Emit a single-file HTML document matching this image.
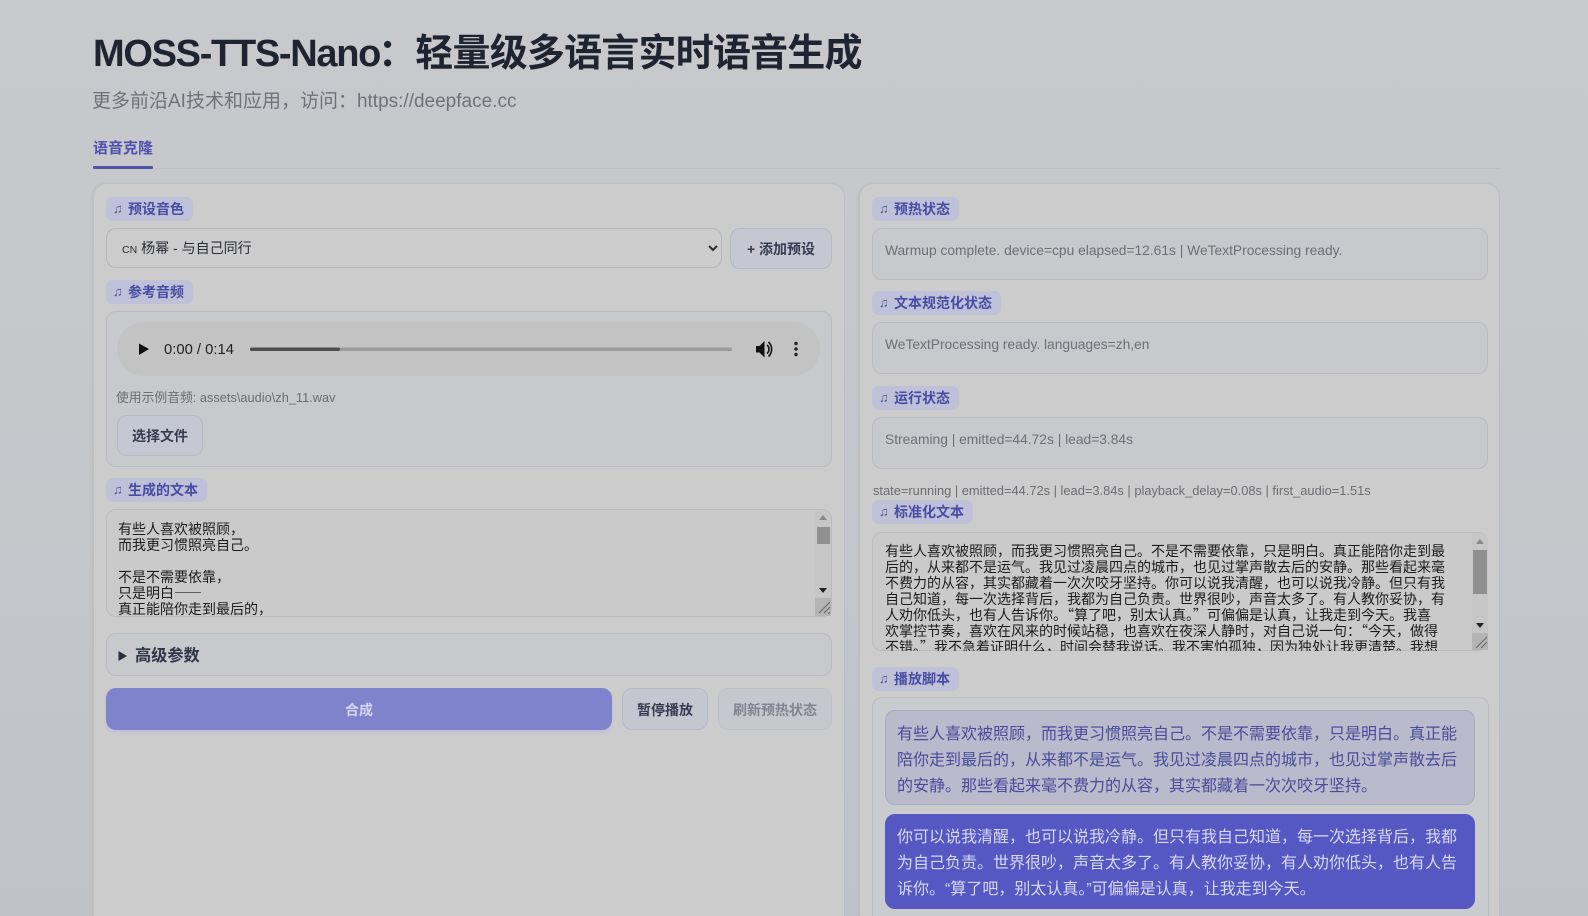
<!DOCTYPE html>
<html lang="zh-CN"><head><meta charset="utf-8"><title>MOSS-TTS-Nano</title>
<style>
*{box-sizing:border-box}
html,body{margin:0;padding:0;width:1588px;height:916px;overflow:hidden}
#p{position:relative;width:1588px;height:916px;overflow:hidden;background:linear-gradient(180deg,#c8c9cc 0,#c5c7cb 45%,#bfc3c8 100%);font-family:"Liberation Sans","Noto Sans CJK SC",sans-serif}
.a{position:absolute;white-space:nowrap}
.panel{background:#cccccc;border:1px solid #bcbec2;border-radius:14px;box-shadow:-1px 0 2px #b9bac0}
.lab{height:24px;border-radius:7px;background:#bec1d7;color:#474ca4;font-size:14px;font-weight:700;line-height:24px;padding-left:22px}
.lab:before{content:"♫";position:absolute;left:7px;top:0;font-size:13px;font-weight:400;color:#50558f}
.box{background:#c8c9cc;border:1px solid #b9bbbf;border-radius:10px}
.btn{border:1px solid #b6b9c4;border-radius:10px;background:#c5c8d3;color:#363c50;font-size:14px;font-weight:700;text-align:center}
.st{color:#6c6f75;font-size:13.8px;line-height:18px}
.mono{font-family:"WenQuanYi Zen Hei","Noto Sans CJK SC",sans-serif;font-size:14px;line-height:16px;color:#1c1c1c}
.sb{position:absolute;width:16px;background:#c6c6c6}
.item{border-radius:10px;font-size:16px;line-height:26px;padding-left:11px}
</style></head><body><div id="p">

<div class="a" style="left:93px;top:28px;font-size:38px;line-height:52px;font-weight:700;color:#1f2530;letter-spacing:-.8px"><span style="letter-spacing:-1.3px">MOSS-TTS-Nano</span><span style="margin-left:-2px">：</span>轻量级多语言实时语音生成</div>
<div class="a" style="left:92px;top:90px;font-size:19px;line-height:24px;color:#6e7279">更多前沿AI技术和应用，访问：https://deepface.cc</div>
<div class="a" style="left:93px;top:139px;font-size:15px;line-height:20px;font-weight:700;color:#4f50ad">语音克隆</div>
<div class="a" style="left:93px;top:168px;width:1408px;height:1px;background:#bfc1c5"></div>
<div class="a" style="left:93px;top:166px;width:60px;height:2.5px;background:#5354a8;border-radius:1px"></div>

<div class="a panel" style="left:93px;top:183px;width:752px;height:760px"></div>
<div class="a panel" style="left:859px;top:183px;width:641px;height:760px"></div>

<div class="a lab" style="left:106px;top:197px;width:87px">预设音色</div>
<select class="a" style="left:106px;top:228px;width:616px;height:40px;border:1px solid #b5b7ba;border-radius:10px;background:#cccccc;color:#2a2d33;font:14px 'Liberation Sans','Noto Sans CJK SC',sans-serif;padding-left:11px"><option></option></select>
<div class="a" style="left:122px;top:238px;font-size:14px;line-height:20px;color:#2a2d33"><span style="font-size:10.5px;margin-right:4px">CN</span>杨幂 - 与自己同行</div>
<div class="a btn" style="left:730px;top:228px;width:102px;height:41px;line-height:40px">+ 添加预设</div>

<div class="a lab" style="left:106px;top:280px;width:87px">参考音频</div>
<div class="a box" style="left:106px;top:311px;width:726px;height:156px"></div>
<div class="a" style="left:117px;top:322px;width:703px;height:54px;border-radius:27px;background:#c3c3c3"></div>
<svg class="a" style="left:119px;top:322px" width="703" height="54" viewBox="0 0 703 54">
<path d="M20 21.5V33L30 27Z" fill="#111"/>
<rect x="131" y="25.5" width="482" height="3.5" rx="1.7" fill="#9a9a9a"/>
<rect x="131" y="25.5" width="90" height="3.5" rx="1.7" fill="#4d4d4d"/>
<path d="M637 24v6.500h3.500l5 5v-16.500l-5 5z" fill="#111"/>
<path d="M648 23a5.500 5.500 0 0 1 0 8.500M649.500 20a10 10 0 0 1 0 14.500" fill="none" stroke="#111" stroke-width="1.600"/>
<circle cx="677" cy="21.500" r="1.700" fill="#222"/><circle cx="677" cy="27" r="1.700" fill="#222"/><circle cx="677" cy="32.500" r="1.700" fill="#222"/>
</svg>
<div class="a" style="left:164px;top:341px;font-size:14.800px;line-height:18px;color:#222">0:00 / 0:14</div>
<div class="a" style="left:116px;top:389px;font-size:12.800px;line-height:18px;color:#6b6d72">使用示例音频: assets\audio\zh_11.wav</div>
<div class="a btn" style="left:117px;top:415px;width:86px;height:41px;line-height:40px">选择文件</div>

<div class="a lab" style="left:106px;top:478px;width:101px">生成的文本</div>
<div class="a box" style="left:106px;top:509px;width:726px;height:108px;background:#cacaca;overflow:hidden"></div>
<div class="a mono" style="left:118px;top:521px;height:95px;overflow:hidden">有些人喜欢被照顾，<br>而我更习惯照亮自己。<br><br>不是不需要依靠，<br>只是明白——<br>真正能陪你走到最后的，</div>
<div class="sb" style="left:815px;top:510px;height:106px;border-radius:0 9px 9px 0"></div>
<svg class="a" style="left:815px;top:510px" width="16" height="106" viewBox="0 0 16 106">
<rect x="2" y="17" width="13" height="17" fill="#8f8f8f"/>
<path d="M8 5l4 5H4z" fill="#888"/><path d="M8 83l4-5H4z" fill="#222"/>
<rect x="0" y="88" width="16" height="18" fill="#b4b4b4"/>
<path d="M15 92l-11 11M15 97l-6 6M15 102l-2 2" stroke="#666" stroke-width="1"/>
</svg>

<div class="a box" style="left:106px;top:633px;width:726px;height:43px"></div>
<svg class="a" style="left:118px;top:650px" width="10" height="12" viewBox="0 0 10 12"><path d="M0.500 1V11L9 6Z" fill="#2a3040"/></svg>
<div class="a" style="left:135px;top:645px;font-size:16.200px;line-height:22px;font-weight:700;color:#2f3648">高级参数</div>

<div class="a" style="left:106px;top:688px;width:506px;height:42px;border-radius:10px;background:#7f83cc;box-shadow:0 2px 3px #bcbed6;color:#d4d6ec;font-size:14px;font-weight:700;text-align:center;line-height:44px">合成</div>
<div class="a btn" style="left:622px;top:688px;width:86px;height:42px;line-height:42px;background:#c4c6d0">暂停播放</div>
<div class="a btn" style="left:718px;top:688px;width:114px;height:42px;line-height:42px;background:#c7c8ce;color:#82858f;border-color:#bfc1c8">刷新预热状态</div>

<div class="a lab" style="left:872px;top:197px;width:87px">预热状态</div>
<div class="a box" style="left:872px;top:228px;width:616px;height:52px"></div>
<div class="a st" style="left:885px;top:242px">Warmup complete. device=cpu elapsed=12.61s | WeTextProcessing ready.</div>

<div class="a lab" style="left:872px;top:291px;width:129px">文本规范化状态</div>
<div class="a box" style="left:872px;top:322px;width:616px;height:52px"></div>
<div class="a st" style="left:885px;top:336px">WeTextProcessing ready. languages=zh,en</div>

<div class="a lab" style="left:872px;top:386px;width:87px">运行状态</div>
<div class="a box" style="left:872px;top:417px;width:616px;height:52px"></div>
<div class="a st" style="left:885px;top:431px">Streaming | emitted=44.72s | lead=3.84s</div>

<div class="a" style="left:873px;top:481.500px;font-size:12.870px;line-height:18px;color:#6b6d72">state=running | emitted=44.72s | lead=3.84s | playback_delay=0.08s | first_audio=1.51s</div>

<div class="a lab" style="left:872px;top:500px;width:101px">标准化文本</div>
<div class="a box" style="left:872px;top:532px;width:616px;height:119px;background:#cacaca"></div>
<div class="a mono" style="left:885px;top:543px;height:108px;overflow:hidden">有些人喜欢被照顾，而我更习惯照亮自己。不是不需要依靠，只是明白。真正能陪你走到最<br>后的，从来都不是运气。我见过凌晨四点的城市，也见过掌声散去后的安静。那些看起来毫<br>不费力的从容，其实都藏着一次次咬牙坚持。你可以说我清醒，也可以说我冷静。但只有我<br>自己知道，每一次选择背后，我都为自己负责。世界很吵，声音太多了。有人教你妥协，有<br>人劝你低头，也有人告诉你。“算了吧，别太认真。”可偏偏是认真，让我走到今天。我喜<br>欢掌控节奏，喜欢在风来的时候站稳，也喜欢在夜深人静时，对自己说一句：“今天，做得<br>不错。”我不急着证明什么，时间会替我说话。我不害怕孤独，因为独处让我更清楚。我想</div>
<div class="sb" style="left:1472px;top:533px;height:117px;border-radius:0 9px 9px 0"></div>
<svg class="a" style="left:1472px;top:533px" width="16" height="117" viewBox="0 0 16 117">
<rect x="1" y="17" width="14" height="44" fill="#8f8f8f"/>
<path d="M8 6l4 5H4z" fill="#888"/><path d="M8 95l4-5H4z" fill="#222"/>
<rect x="0" y="100" width="16" height="17" fill="#b4b4b4"/>
<path d="M15 104l-11 11M15 109l-6 6" stroke="#666" stroke-width="1"/>
</svg>

<div class="a lab" style="left:872px;top:667px;width:87px">播放脚本</div>
<div class="a box" style="left:872px;top:697px;width:617px;height:240px;background:#cacbcf"></div>
<div class="a item" style="left:885px;top:710px;width:590px;height:95px;background:#b9bacb;border:1px solid #a9abc0;color:#484c9a;padding-top:10.500px">有些人喜欢被照顾，而我更习惯照亮自己。不是不需要依靠，只是明白。真正能<br>陪你走到最后的，从来都不是运气。我见过凌晨四点的城市，也见过掌声散去后<br>的安静。那些看起来毫不费力的从容，其实都藏着一次次咬牙坚持。</div>
<div class="a item" style="left:885px;top:814px;width:590px;height:95px;background:#5557c3;border:1px solid #5557c3;color:#d7d8ef;padding-top:10px">你可以说我清醒，也可以说我冷静。但只有我自己知道，每一次选择背后，我都<br>为自己负责。世界很吵，声音太多了。有人教你妥协，有人劝你低头，也有人告<br>诉你。“算了吧，别太认真。”可偏偏是认真，让我走到今天。</div>
</div></body></html>
